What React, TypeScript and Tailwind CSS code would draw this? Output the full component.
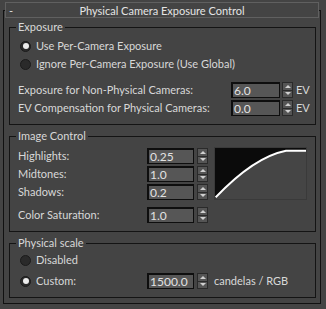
import React from 'react'

const font = { fontFamily: 'Lato, "Noto Sans", sans-serif' }

function Radio({ checked }: { checked?: boolean }) {
    return (
        <div className="w-[11px] h-[11px] rounded-full bg-[#2a2a2a] border border-[#1b1b1b] flex items-center justify-center shrink-0">
            {checked && <div className="w-[6px] h-[6px] rounded-full bg-[#ececec]" />}
        </div>
    )
}

function Field({ value, w }: { value: string; w: string }) {
    return (
        <div className={`${w} h-[16px] bg-[#565656] border border-[#0e0e0e] border-t-2 border-l-2 pl-[1px] flex items-center text-[12px] text-[#e2e2e2] leading-none shrink-0`}>
            {value}
        </div>
    )
}

function Spinner() {
    return (
        <div className="w-[11px] h-[16px] flex flex-col border border-[#2a2a2a] bg-[#555] shrink-0">
            <div className="flex-1 flex items-center justify-center border-b border-[#2a2a2a]">
                <div className="w-0 h-0 border-l-[3px] border-r-[3px] border-b-[3px] border-l-transparent border-r-transparent border-b-[#d0d0d0]" />
            </div>
            <div className="flex-1 flex items-center justify-center">
                <div className="w-0 h-0 border-l-[3px] border-r-[3px] border-t-[3px] border-l-transparent border-r-transparent border-t-[#d0d0d0]" />
            </div>
        </div>
    )
}

function Group({ title, className, children }: { title: string; className: string; children: React.ReactNode }) {
    return (
        <div className={`ml-[5px] w-[307px] border border-[#141414] ${className}`}>
            <div className="-mt-[8px] ml-[6px] px-[2px] w-fit bg-[#444] leading-[14px] text-[#d8d8d8]">{title}</div>
            {children}
        </div>
    )
}

export default function App() {
    return (
        <div className="w-[326px] h-[309px] bg-[#444] pt-[2px] text-[11px] text-[#d8d8d8] whitespace-nowrap" style={font}>
            <div className="ml-[5px] w-[314px] h-[16px] border border-[#606060] bg-[#444] relative z-10 flex items-center leading-none">
                <span className="ml-[3px] w-[6px] text-[#e0e0e0]">-</span>
                <span className="flex-1 text-center pr-[9px] text-[#e4e4e4]">Physical Camera Exposure Control</span>
            </div>
            <div className="-mt-[8px] ml-[3px] w-[318px] h-[294px] border border-[#111]">
                <Group title="Exposure" className="mt-[16px] pb-[7px]">
                    <div className="mt-[3px] h-[18px] flex items-center ml-[10px]">
                        <Radio checked />
                        <span className="ml-[5px]">Use Per-Camera Exposure</span>
                    </div>
                    <div className="h-[18px] flex items-center ml-[10px]">
                        <Radio />
                        <span className="ml-[5px]">Ignore Per-Camera Exposure (Use Global)</span>
                    </div>
                    <div className="mt-[8px] h-[18px] flex items-center ml-[8px]">
                        <span className="w-[213px]">Exposure for Non-Physical Cameras:</span>
                        <Field value="6.0" w="w-[49px]" />
                        <div className="ml-[2px]"><Spinner /></div>
                        <span className="ml-[3px]">EV</span>
                    </div>
                    <div className="h-[18px] flex items-center ml-[8px]">
                        <span className="w-[213px]">EV Compensation for Physical Cameras:</span>
                        <Field value="0.0" w="w-[49px]" />
                        <div className="ml-[2px]"><Spinner /></div>
                        <span className="ml-[3px]">EV</span>
                    </div>
                </Group>

                <Group title="Image Control" className="mt-[11px] pb-[7px]">
                    <div className="mt-[4px] flex">
                        <div className="flex flex-col">
                            {[['Highlights:', '0.25'], ['Midtones:', '1.0'], ['Shadows:', '0.2']].map(([l, v]) => (
                                <div key={l} className="h-[18px] flex items-center ml-[8px]">
                                    <span className="w-[129px]">{l}</span>
                                    <Field value={v} w="w-[47px]" />
                                    <div className="ml-[3px]"><Spinner /></div>
                                </div>
                            ))}
                        </div>
                        <div className="ml-[6px] w-[93px] h-[53px] border border-[#3a3a3a] bg-[#0b0b0b]">
                            <svg width="91" height="51" viewBox="0 0 91 51" className="block">
                                <path d="M0.7,49.3 Q39,9 71,2.7 H91 V51 H0 Z" fill="#454545" />
                                <path d="M0.7,49.3 Q39,9 71,2.7 H91" fill="none" stroke="#ffffff" strokeWidth="2" />
                            </svg>
                        </div>
                    </div>
                    <div className="mt-[5px] h-[18px] flex items-center ml-[8px]">
                        <span className="w-[129px]">Color Saturation:</span>
                        <Field value="1.0" w="w-[47px]" />
                        <div className="ml-[3px]"><Spinner /></div>
                    </div>
                </Group>

                <Group title="Physical scale" className="mt-[11px] pb-[7px]">
                    <div className="mt-[1px] h-[18px] flex items-center ml-[10px]">
                        <Radio />
                        <span className="ml-[5px]">Disabled</span>
                    </div>
                    <div className="mt-[3px] h-[18px] flex items-center ml-[10px]">
                        <Radio checked />
                        <span className="ml-[5px] w-[111px]">Custom:</span>
                        <Field value="1500.0" w="w-[47px]" />
                        <div className="ml-[3px]"><Spinner /></div>
                        <span className="ml-[6px]">candelas / RGB</span>
                    </div>
                </Group>
            </div>
        </div>
    )
}
